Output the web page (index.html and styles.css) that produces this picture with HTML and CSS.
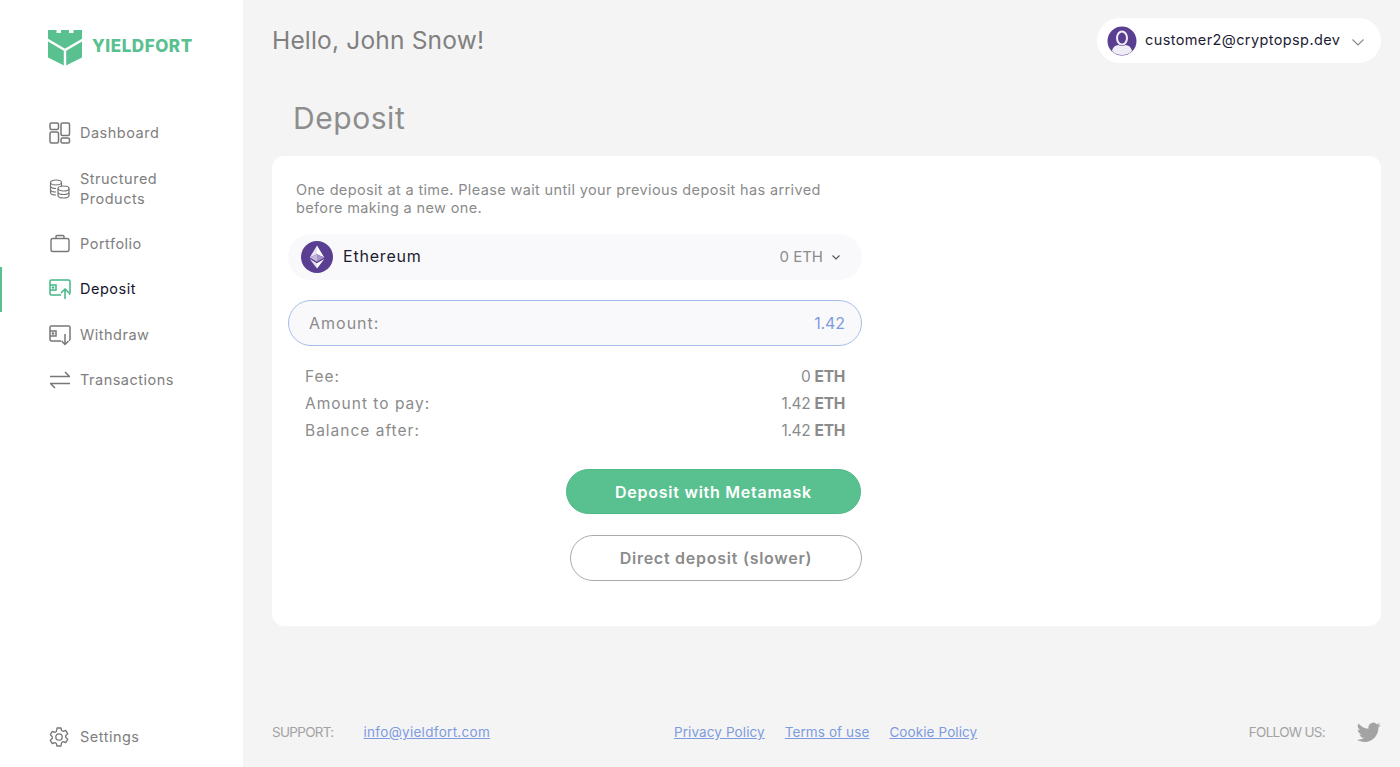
FILE: index.html
```html
<!DOCTYPE html>
<html lang="en">
<head>
<meta charset="utf-8">
<title>Yieldfort Deposit</title>
<link rel="stylesheet" href="styles.css">
</head>
<body>
<div class="app">
  <aside class="sidebar">
    <div class="logo">
      <svg class="logo-mark" viewBox="0 0 34 36" width="34" height="36">
        <path fill="#59c090" d="M0 0h8.500v3h4.500V0h8v3h4.500V0H34v27.500L17 36 0 27.500z"/>
        <path fill="none" stroke="#fff" stroke-width="2.400" d="M-1 9.500L17 20l18-10.500M17 20v16"/>
      </svg>
      <span class="logo-text">YIELDFORT</span>
    </div>
    <nav class="nav">
      <a class="nav-item">
        <svg class="nav-icon" viewBox="0 0 22 22" width="22" height="22" fill="none" stroke="#777" stroke-width="1.500"><rect x="1" y="1" width="8.500" height="6.500" rx="1.500"/><rect x="1" y="10" width="8.500" height="11" rx="1.500"/><rect x="12" y="1" width="8.500" height="12.500" rx="1.500"/><rect x="12" y="16" width="8.500" height="5" rx="1.500"/></svg>
        <span>Dashboard</span>
      </a>
      <a class="nav-item">
        <svg class="nav-icon" viewBox="0 0 22 22" width="22" height="22" fill="none" stroke="#777" stroke-width="1.200"><ellipse cx="7" cy="4.500" rx="5.500" ry="2.500"/><path d="M1.500 4.500v10c0 1.400 2.500 2.500 5.500 2.500M1.500 8c0 1.400 2.500 2.500 5.500 2.500M1.500 11.500c0 1.400 2.500 2.500 5.500 2.500M12.500 4.500v4"/><ellipse cx="14.500" cy="10.500" rx="5.500" ry="2.500"/><path d="M9 10.500v7c0 1.400 2.500 2.500 5.500 2.500s5.500-1.100 5.500-2.500v-7M9 14c0 1.400 2.500 2.500 5.500 2.500s5.500-1.100 5.500-2.500"/></svg>
        <span>Structured<br>Products</span>
      </a>
      <a class="nav-item">
        <svg class="nav-icon" viewBox="0 0 22 22" width="22" height="22" fill="none" stroke="#777" stroke-width="1.400"><rect x="2" y="5.500" width="18" height="13" rx="2"/><path d="M7 5.500V3.500c0-.6.400-1 1-1h6c.6 0 1 .4 1 1v2"/></svg>
        <span>Portfolio</span>
      </a>
      <a class="nav-item active">
        <svg class="nav-icon" viewBox="0 0 22 22" width="22" height="22" fill="none" stroke="#43b784" stroke-width="1.500"><path d="M12 17H2.500A1.500 1.500 0 0 1 1 15.500v-12A1.500 1.500 0 0 1 2.500 2h17A1.500 1.500 0 0 1 21 3.500V15a2 2 0 0 1-1 1.700"/><path d="M1 7h6v5H1"/><circle cx="4" cy="9.500" r=".6"/><path d="M16 21v-10M12 15l4-4 4 4"/></svg>
        <span>Deposit</span>
      </a>
      <a class="nav-item">
        <svg class="nav-icon" viewBox="0 0 22 22" width="22" height="22" fill="none" stroke="#777" stroke-width="1.500"><path d="M12 17H2.500A1.500 1.500 0 0 1 1 15.500v-12A1.500 1.500 0 0 1 2.500 2h17A1.500 1.500 0 0 1 21 3.500V15a2 2 0 0 1-1 1.700"/><path d="M1 7h6v5H1"/><circle cx="4" cy="9.500" r=".6"/><path d="M16 10v10.500M12.500 17l3.500 3.500 3.500-3.500"/></svg>
        <span>Withdraw</span>
      </a>
      <a class="nav-item">
        <svg class="nav-icon" viewBox="0 0 22 22" width="22" height="22" fill="none" stroke="#777" stroke-width="1.500"><path d="M1 7.500h20M16 3l4.500 4.500M21 14.500H1M6 19l-4.500-4.500"/></svg>
        <span>Transactions</span>
      </a>
    </nav>
    <a class="nav-item settings">
      <svg class="nav-icon" viewBox="0 0 22 22" width="22" height="22" fill="none" stroke="#777" stroke-width="1.300"><circle cx="11" cy="11" r="3.200"/><path d="M9 2h4l.6 2.500 1.700.8 2.400-1 2 3.400-1.900 1.700v2.200l1.900 1.700-2 3.400-2.400-1-1.700.8L13 20H9l-.6-2.500-1.700-.8-2.400 1-2-3.400 1.900-1.700V10.400L2.300 8.700l2-3.400 2.400 1 1.700-.8z" stroke-linejoin="round"/></svg>
      <span>Settings</span>
    </a>
  </aside>

  <main class="main">
    <header class="topbar">
      <h1 class="greeting">Hello, John Snow!</h1>
      <div class="user">
        <svg class="avatar" viewBox="0 0 30 30" width="30" height="30"><circle cx="15" cy="15" r="14.500" fill="#5a3e91"/><ellipse cx="15" cy="12" rx="5" ry="6.500" fill="none" stroke="#f1edf7" stroke-width="2"/><path d="M5 25c.8-4 3.500-5.800 6.500-6 2 1.200 5 1.200 7 0 3 .2 5.700 2 6.500 6-2.500 2.600-6 4-10 4s-7.500-1.400-10-4z" fill="#f1edf7"/></svg>
        <span class="user-email">customer2@cryptopsp.dev</span>
        <svg class="user-caret" viewBox="0 0 12 7" width="12" height="7" fill="none" stroke="#888" stroke-width="1.100"><path d="M.5.500L6 6l5.500-5.500"/></svg>
      </div>
    </header>

    <h2 class="page-title">Deposit</h2>

    <section class="card">
      <div class="form">
        <p class="intro">One deposit at a time. Please wait until your previous deposit has arrived before making a new one.</p>
        <div class="select">
          <svg class="coin" viewBox="0 0 32 32" width="32" height="32">
            <circle cx="16" cy="16" r="16" fill="#5a3e91"/>
            <path fill="#e6e0f0" d="M16 4.500v8.700l-7.300 3.300z"/>
            <path fill="#fff" d="M16 4.500l7.300 12L16 13.200z"/>
            <path fill="#c3b6dc" d="M16 13.200v7.600l-7.300-4.300z"/>
            <path fill="#a594c8" d="M16 13.200l7.300 3.300-7.300 4.300z"/>
            <path fill="#e6e0f0" d="M16 22.300v5.200l-7.300-9.500z"/>
            <path fill="#fff" d="M16 22.300l7.300-4.300-7.300 9.500z"/>
          </svg>
          <span class="coin-name">Ethereum</span>
          <span class="coin-balance">0 ETH</span>
          <svg class="select-caret" viewBox="0 0 8 5" width="8" height="5" fill="none" stroke="#555" stroke-width="1.100"><path d="M.5.500L4 4 7.500.500"/></svg>
        </div>
        <div class="amount">
          <span class="amount-label">Amount:</span>
          <span class="amount-value">1.42</span>
        </div>
        <dl class="summary">
          <div class="summary-row"><dt>Fee:</dt><dd>0 <b>ETH</b></dd></div>
          <div class="summary-row"><dt>Amount to pay:</dt><dd>1.42 <b>ETH</b></dd></div>
          <div class="summary-row"><dt>Balance after:</dt><dd>1.42 <b>ETH</b></dd></div>
        </dl>
        <div class="actions">
          <button class="btn btn-primary">Deposit with Metamask</button>
          <button class="btn btn-outline">Direct deposit (slower)</button>
        </div>
      </div>
    </section>

    <footer class="footer">
      <div class="support">
        <span class="caps">SUPPORT:</span>
        <a class="link link-mail">info@yieldfort.com</a>
      </div>
      <div class="legal">
        <a class="link">Privacy Policy</a>
        <a class="link">Terms of use</a>
        <a class="link">Cookie Policy</a>
      </div>
      <div class="follow">
        <span class="caps">FOLLOW US:</span>
        <svg viewBox="0 0 24 24" width="24" height="24"><path fill="#a3a3a3" d="M23.600 4.900c-.9.400-1.800.7-2.800.8 1-.6 1.800-1.500 2.100-2.700-.9.600-2 1-3.100 1.200a4.900 4.900 0 0 0-8.300 4.500C7.500 8.500 3.900 6.500 1.500 3.500a4.900 4.900 0 0 0 1.500 6.500c-.8 0-1.500-.2-2.200-.6v.1c0 2.400 1.700 4.400 3.900 4.800-.7.200-1.500.2-2.200.1.600 2 2.400 3.400 4.600 3.400a9.900 9.900 0 0 1-7.200 2c2.200 1.400 4.800 2.200 7.500 2.200 9.100 0 14-7.500 14-14v-.6c1-.7 1.800-1.600 2.400-2.500z"/></svg>
      </div>
    </footer>
  </main>
</div>
</body>
</html>
```
FILE: styles.css
```css
* { box-sizing: border-box; }
html, body { height: 100%; }
body {
  margin: 0;
  background: #f4f4f4;
  color: #8b8b8b;
  font-family: "Inter", "Liberation Sans", sans-serif;
  overflow: hidden;
}
.app { display: flex; height: 767px; }

.sidebar {
  width: 243px;
  flex: none;
  background: #fff;
  display: flex;
  flex-direction: column;
  padding: 30px 0 18px;
}
.logo { display: flex; align-items: center; gap: 10px; padding: 0 0 0 48px; height: 36px; }
.logo-text { font-size: 17px; font-weight: 800; color: #59c090; letter-spacing: .55px; margin-bottom: 4px; }

.nav { display: flex; flex-direction: column; margin-top: 44.500px; }
.nav-item {
  display: flex;
  align-items: center;
  gap: 9px;
  padding: 12.700px 0 12.700px 49px;
  font-size: 14.500px;
  line-height: 20px;
  letter-spacing: .5px;
  color: #7e7e7e;
}
.nav-item.active {
  color: #14142b;
  box-shadow: inset 2px 0 0 #59c090;
}
.nav-icon { flex: none; margin: -1px 0; }
.settings { margin-top: auto; padding-top: 2px; padding-bottom: 2px; padding-left: 48px; gap: 10px; }

.main {
  flex: 1;
  min-width: 0;
  display: flex;
  flex-direction: column;
  padding: 18px 19px 23px 29px;
}
.topbar { display: flex; justify-content: space-between; align-items: center; height: 45px; }
.greeting { margin: 0 0 2px; font-size: 24.500px; font-weight: 400; letter-spacing: .18px; color: #808080; }
.user {
  width: 284px;
  height: 45px;
  background: #fff;
  border-radius: 23px;
  display: flex;
  align-items: center;
  padding-left: 10px;
  gap: 8px;
}
.user-email { font-size: 14.500px; letter-spacing: .39px; color: #1c1c34; white-space: nowrap; margin-bottom: 2px; }
.user-caret { margin-left: 4px; margin-top: 3px; }
.avatar { flex: none; }

.page-title { margin: 37px 0 20px 21px; font-size: 30px; line-height: 36px; font-weight: 400; letter-spacing: .55px; color: #8d8d8d; }

.card { background: #fff; border-radius: 12px; height: 470px; padding: 25px 0 0 16px; }
.form { width: 574px; display: flex; flex-direction: column; }
.intro { margin: 0; padding: 0 20px 0 8px; font-size: 14.500px; line-height: 18px; letter-spacing: .36px; color: #8b8b8b; }
.select {
  margin-top: 17px;
  height: 46px;
  border-radius: 23px;
  background: #f9f9fb;
  display: flex;
  align-items: center;
  padding: 0 22px 0 13px;
}
.coin { flex: none; }
.coin-name { margin-left: 10px; font-size: 16px; letter-spacing: .8px; color: #1c1c2e; margin-bottom: 2px; }
.coin-balance { margin-left: auto; font-size: 15px; color: #8b8b8b; margin-bottom: 2px; }
.select-caret { margin-left: 9px; }
.amount {
  margin-top: 20px;
  height: 46px;
  border-radius: 23px;
  border: 1px solid #a6bdea;
  background: #f9f9fb;
  display: flex;
  justify-content: space-between;
  align-items: center;
  padding: 0 16px 0 20px;
  font-size: 16px;
  color: #8b8b8b;
}
.amount-label { letter-spacing: 1px; }
.amount-value { color: #7d9be0; letter-spacing: -.1px; }
.summary { margin: 17px 0 0; padding: 0 17px; font-size: 15.500px; }
.summary-row { display: flex; justify-content: space-between; align-items: center; height: 27px; }
.summary-row dt, .summary-row dd { margin: 0; }
.summary-row dt { letter-spacing: 1px; }
.summary-row dd { letter-spacing: -.3px; }
.summary-row b { font-weight: 700; }
.actions { display: flex; flex-direction: column; align-items: flex-end; gap: 21px; margin-top: 25px; }
.btn {
  font-family: inherit;
  font-size: 16px;
  font-weight: 600;
  letter-spacing: .75px;
  border-radius: 23px;
  height: 45px;
}
.btn-primary { width: 295px; margin-right: 1px; background: #59c090; border: 1px solid #4fb988; color: #fff; }
.btn-outline { width: 292px; height: 46px; background: #fff; border: 1px solid #aaa; color: #8b8b8b; }

.footer {
  margin-top: auto;
  display: flex;
  align-items: center;
  font-size: 13.500px;
  color: #a3a3a3;
  height: 24px;
}
.support { display: flex; gap: 30px; width: 402px; }
.caps { letter-spacing: -.7px; }
.legal { display: flex; gap: 20px; letter-spacing: .1px; }
.follow { margin-left: auto; display: flex; align-items: center; gap: 32px; }
.link { color: #7d9be0; text-decoration: underline; }
.link-mail { letter-spacing: .3px; }
```
